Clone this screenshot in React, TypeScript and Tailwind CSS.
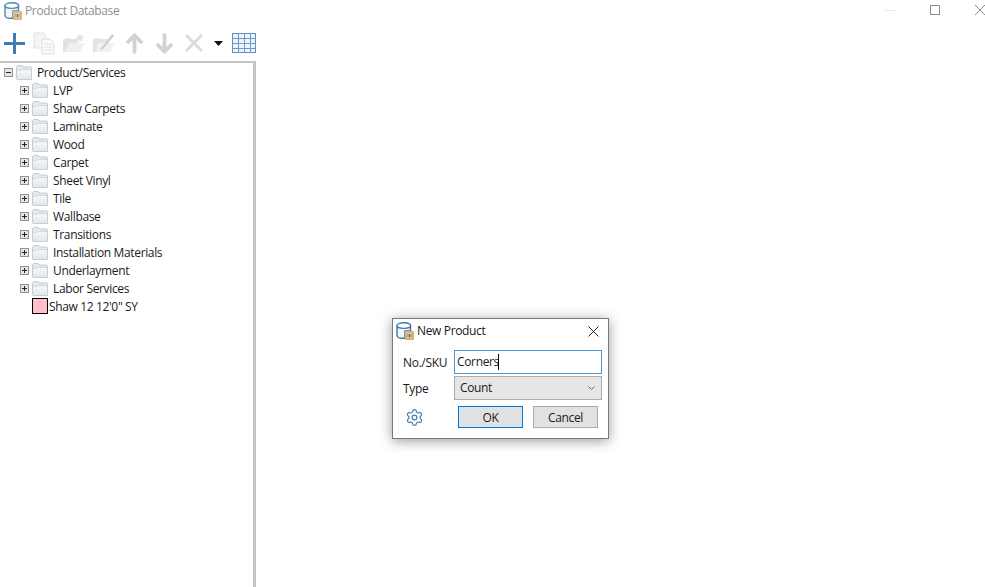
import { Settings } from 'lucide-react'

const folders = [
    'LVP',
    'Shaw Carpets',
    'Laminate',
    'Wood',
    'Carpet',
    'Sheet Vinyl',
    'Tile',
    'Wallbase',
    'Transitions',
    'Installation Materials',
    'Underlayment',
    'Labor Services',
]

function DbIcon({ className }: { className?: string }) {
    return (
        <svg viewBox="0 0 18 18" width="18" height="18" className={className}>
            <path d="M1 3.5v10c0 1.8 3 2.8 5.5 2.8H9V9h5.5V3.5" fill="#f1f6fa" stroke="#3a78ad" strokeWidth="1.4" />
            <ellipse cx="7.8" cy="3.6" rx="6.8" ry="2.8" fill="#fff" stroke="#3a78ad" strokeWidth="1.4" />
            <rect x="9" y="9" width="9" height="9" fill="#d9b36c" />
            <path d="M11 11.5h5v4.5h-5z" fill="#f3ead8" />
            <path d="M12 12v3.5M13.5 12v3.5M15 12v3.5" stroke="#5f5646" strokeWidth="0.9" />
        </svg>
    )
}

function FolderIcon() {
    return (
        <svg viewBox="0 0 16 15" width="16" height="15" className="shrink-0">
            <defs>
                <linearGradient id="folderFront" x1="0" y1="0" x2="0" y2="1">
                    <stop offset="0" stopColor="#f7f9fb" />
                    <stop offset="1" stopColor="#dfe7ed" />
                </linearGradient>
            </defs>
            <path d="M.5 3V1.5l1-1h5L8 2h7l.5.5v12H1l-.5-.5z" fill="#e3e9ee" stroke="#c6cdd3" />
            <path d="M1 6 6.5 4.5h8.5v9.5H1z" fill="url(#folderFront)" />
            <path d="M1 6 6.5 4.5H15" fill="none" stroke="#d0d7dc" />
        </svg>
    )
}

function Expander({ open }: { open?: boolean }) {
    return (
        <svg viewBox="0 0 9 9" width="9" height="9" className="shrink-0">
            <rect x=".5" y=".5" width="8" height="8" fill="#e6e6e6" stroke="#929292" />
            <path d="M2 4.5h5" stroke="#222" />
            {!open && <path d="M4.5 2v5" stroke="#222" />}
        </svg>
    )
}

function Toolbar() {
    return (
        <div className="flex h-[39px] shrink-0 items-center pt-[3px]">
            <svg viewBox="0 0 21 21" width="21" height="21" className="ml-[4px]">
                <path d="M0 10.5h21M10.5 0v21" stroke="#3f7cb6" strokeWidth="3" />
            </svg>
            {/* copy */}
            <svg viewBox="0 0 22 23" width="22" height="23" className="ml-[8px]">
                <path d="M1 1h9l3 3v12H1z" fill="#f5f5f5" stroke="#e2e2e2" />
                <path d="M9 7h8l4 4v11H9z" fill="#fafafa" stroke="#dcdcdc" />
                <path d="M11 12h8M11 15h8M11 18h8" stroke="#e0e0e0" />
            </svg>
            {/* new folder */}
            <svg viewBox="0 0 22 18" width="22" height="18" className="ml-[8px]">
                <path d="M0 5l5-1 2 1h8v13H0z" fill="#e2e2e2" />
                <path d="M2 18 6 9h16l-5 9z" fill="#f0f0f0" />
                <path d="M17 0v8M13 4h8M14 1l6 6M20 1l-6 6" stroke="#d9d9d9" />
            </svg>
            {/* edit folder */}
            <svg viewBox="0 0 22 18" width="22" height="18" className="ml-[8px]">
                <path d="M0 5l5-1 2 1h9v13H0z" fill="#e4e4e4" />
                <path d="M2 18 6 9h16l-5 9z" fill="#f1f1f1" />
                <path d="M8 14 19 0l2 2-11 13-3 1z" fill="#d0d0d0" />
            </svg>
            <svg viewBox="0 0 20 21" width="19" height="21" className="ml-[10px]">
                <path d="M10 2v19M2 10l8-8 8 8" fill="none" stroke="#d2d2d2" strokeWidth="4" />
            </svg>
            <svg viewBox="0 0 20 21" width="19" height="21" className="ml-[11px]">
                <path d="M10 0v19M2 11l8 8 8-8" fill="none" stroke="#d2d2d2" strokeWidth="4" />
            </svg>
            <svg viewBox="0 0 18 18" width="18" height="18" className="ml-[11px]">
                <path d="M1 1l16 16M17 1 1 17" stroke="#dcdcdc" strokeWidth="3" />
            </svg>
            <svg viewBox="0 0 9 5" width="9" height="5" className="ml-[11px]">
                <path d="M0 0h9L4.5 5z" fill="#111" />
            </svg>
            <svg viewBox="0 0 24 20" width="24" height="20" className="ml-[9px]">
                <rect x=".5" y=".5" width="23" height="19" fill="#eef4fa" stroke="#5e90c4" />
                <path d="M.5 5.5h23M.5 10.5h23M.5 15.5h23M6.5 0v20M12.5 0v20M18.5 0v20" stroke="#6f9bcb" />
            </svg>
        </div>
    )
}

export default function App() {
    return (
        <div className="relative flex h-[587px] w-[985px] flex-col overflow-hidden bg-white font-['Open_Sans',sans-serif] text-[12px] tracking-[-0.35px] text-[#1a1a1a]">
            <div className="flex h-[22px] shrink-0 items-center">
                <DbIcon className="ml-[4px] opacity-90" />
                <span className="ml-[3px] text-[#8f8f8f]">Product Database</span>
                <div className="mb-[2px] ml-auto flex items-center">
                    <div className="h-px w-[10px] bg-[#e8e8e8]" />
                    <svg viewBox="0 0 10 10" width="10" height="10" className="ml-[35px]">
                        <rect x=".5" y=".5" width="9" height="9" fill="none" stroke="#8c8c8c" />
                    </svg>
                    <svg viewBox="0 0 10 10" width="10" height="10" className="ml-[35px]">
                        <path d="M0 0l10 10M10 0 0 10" stroke="#8c8c8c" />
                    </svg>
                </div>
            </div>
            <Toolbar />
            <div className="w-[256px] flex-1 border-t-2 border-r-[3px] border-[#c4c4c4]">
                <div className="flex h-[18px] items-center">
                    <div className="ml-[4px]"><Expander open /></div>
                    <div className="ml-[3px]"><FolderIcon /></div>
                    <span className="ml-[5px] pt-[2px]">Product/Services</span>
                </div>
                {folders.map((name) => (
                    <div key={name} className="flex h-[18px] items-center">
                        <div className="ml-[20px]"><Expander /></div>
                        <div className="ml-[3px]"><FolderIcon /></div>
                        <span className="ml-[5px] pt-[2px]">{name}</span>
                    </div>
                ))}
                <div className="flex h-[18px] items-center">
                    <div className="ml-[32px] h-[16px] w-[16px] border border-black bg-[#ffc0cb]" />
                    <span className="ml-px pt-[2px]">Shaw 12 12'0" SY</span>
                </div>
            </div>

            {/* dialog */}
            <div className="absolute left-[392px] top-[318px] h-[121px] w-[217px] border border-[#7a7a7a] bg-white shadow-[0_2px_12px_rgba(0,0,0,0.4)]">
                <div className="flex h-[24px] items-center">
                    <DbIcon className="ml-[3px]" />
                    <span className="ml-[3px]">New Product</span>
                    <svg viewBox="0 0 11 11" width="11" height="11" className="ml-auto mr-[9px]">
                        <path d="M.5.5l10 10M10.5.5l-10 10" stroke="#222" />
                    </svg>
                </div>
                <div className="mt-[7px] flex items-center">
                    <span className="ml-[10px] w-[51px] pt-[2px]">No./SKU</span>
                    <div className="flex h-[24px] w-[148px] items-center border border-[#4a97d8] pl-[2px]">
                        Corners
                        <span className="-ml-[1px] h-[16px] w-px bg-black" />
                    </div>
                </div>
                <div className="mt-[2px] flex items-center">
                    <span className="ml-[10px] w-[51px] pt-[2px]">Type</span>
                    <div className="flex h-[24px] w-[148px] items-center justify-between border border-[#adadad] bg-[#e6e6e6] pl-[5px] pr-[6px]">
                        Count
                        <svg viewBox="0 0 7 4" width="7" height="4">
                            <path d="M.5.5 3.5 3.5 6.5.5" fill="none" stroke="#666" />
                        </svg>
                    </div>
                </div>
                <div className="mt-[6px] flex items-center">
                    <Settings size={19} strokeWidth={1.5} className="ml-[12px] text-[#3f7cb6]" />
                    <button className="ml-[34px] h-[22px] w-[65px] border border-[#0078d7] bg-[#e1e1e1] pt-px">OK</button>
                    <button className="ml-[10px] h-[22px] w-[65px] border border-[#adadad] bg-[#e1e1e1] pt-px">Cancel</button>
                </div>
            </div>
        </div>
    )
}
